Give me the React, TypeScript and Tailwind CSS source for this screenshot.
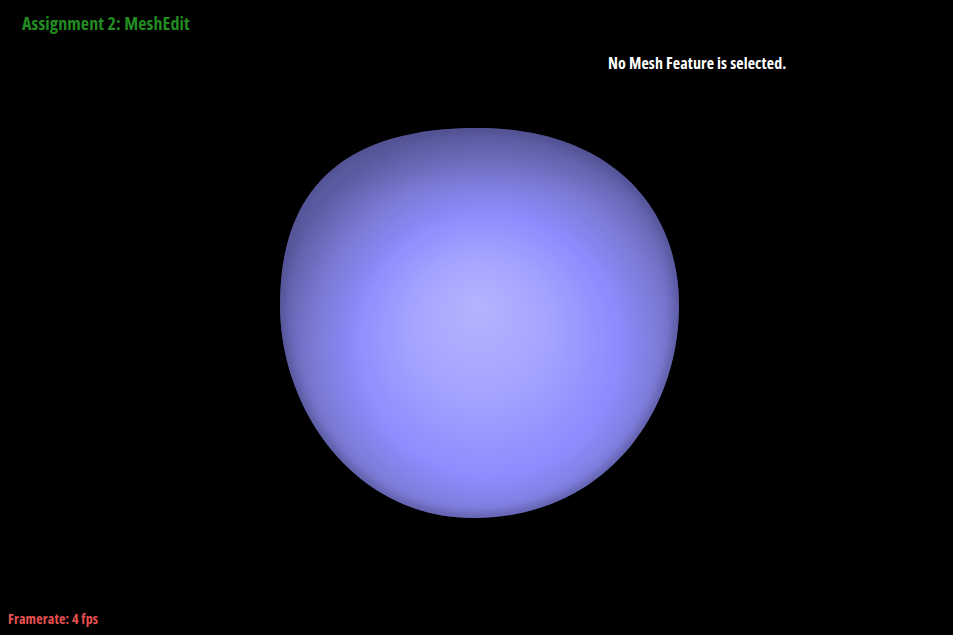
const blobPath =
  "M478 128 C608 128 679 205 679 305 C679 415 603 518 473 518 C355 518 280 410 280 305 C280 180 353 128 478 128 Z";

function MeshBlob() {
  return (
    <svg viewBox="0 0 953 635" className="block w-full h-full">
      <defs>
        <clipPath id="blob">
          <path d={blobPath} />
        </clipPath>
        {/* falloff outside the saturated ring */}
        <radialGradient id="falloff" gradientUnits="userSpaceOnUse" cx="488" cy="346" r="218">
          <stop offset="0" stopColor="#8c8cff" />
          <stop offset="0.6" stopColor="#8c8cff" />
          <stop offset="0.8" stopColor="#7a7ad4" />
          <stop offset="1" stopColor="#5c5ca4" />
        </radialGradient>
        {/* highlight inside the ring, focal point at the bright spot */}
        <radialGradient id="core" gradientUnits="userSpaceOnUse" cx="484" cy="345" r="132" fx="476" fy="305">
          <stop offset="0" stopColor="#b4b4ff" />
          <stop offset="0.5" stopColor="#b4b4ff" stopOpacity="0.62" />
          <stop offset="1" stopColor="#b4b4ff" stopOpacity="0" />
        </radialGradient>
        <linearGradient id="topShade" gradientUnits="userSpaceOnUse" x1="0" y1="128" x2="0" y2="195">
          <stop offset="0" stopColor="#50508c" stopOpacity="0.35" />
          <stop offset="1" stopColor="#50508c" stopOpacity="0" />
        </linearGradient>
        <filter id="edgeBlur" x="-30%" y="-30%" width="160%" height="160%">
          <feGaussianBlur stdDeviation="5" />
        </filter>
      </defs>
      <g clipPath="url(#blob)">
        <rect x="270" y="120" width="420" height="405" fill="url(#falloff)" />
        <rect x="270" y="120" width="420" height="405" fill="url(#core)" />
        <rect x="270" y="120" width="420" height="75" fill="url(#topShade)" />
        <path d={blobPath} fill="none" stroke="#4c4c88" strokeWidth="7" filter="url(#edgeBlur)" opacity="0.75" />
      </g>
    </svg>
  );
}

export default function App() {
  return (
    <div
      className="relative w-[953px] h-[635px] overflow-hidden bg-black font-bold"
      style={{ fontFamily: '"Open Sans", "Liberation Sans", sans-serif', fontStretch: "75%" }}
    >
      <MeshBlob />
      <div className="absolute left-[22px] top-[11px] text-[18px] leading-6 tracking-[0.12px] text-[#228b22]">
        Assignment 2: MeshEdit
      </div>
      <div className="absolute left-[608px] top-[52px] text-[16px] leading-[22px] tracking-[0.11px] text-white">
        No Mesh Feature is selected.
      </div>
      <div className="absolute left-[8px] bottom-[7px] text-[14px] leading-[18px] tracking-[0.15px] text-[#e85050]">
        Framerate: 4 fps
      </div>
    </div>
  );
}
